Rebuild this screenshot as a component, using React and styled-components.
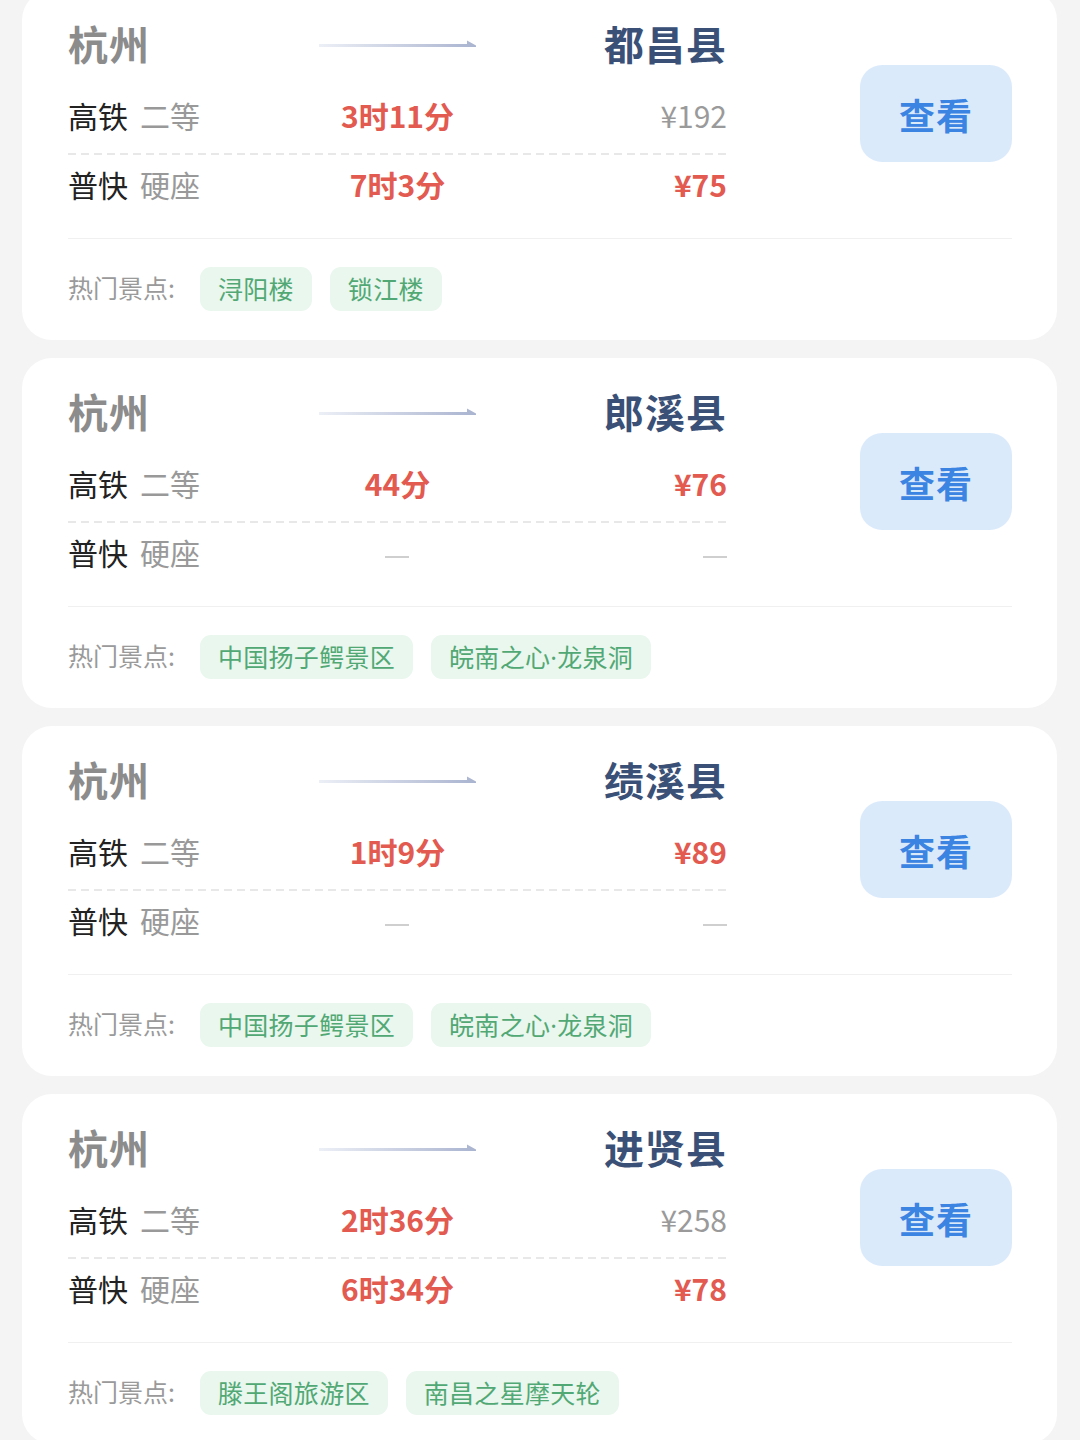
import React from 'react'
import styled, { createGlobalStyle } from 'styled-components'

const GlobalStyle = createGlobalStyle`
    html, body {
        margin: 0;
        padding: 0;
        background: #f4f4f4;
        font-family: "Noto Sans CJK SC", "Noto Sans", sans-serif;
    }
`;

const List = styled.div`
    display: flex;
    flex-direction: column;
    gap: 18px;
    padding: 0 23px 40px 22px;
    margin-top: -10px;
`;

const Card = styled.section`
    background: #ffffff;
    border-radius: 30px;
    padding: 25px 45px 29px 46px;
`;

const Top = styled.div`
    display: flex;
    justify-content: space-between;
    align-items: flex-start;
    padding-bottom: 23px;
    border-bottom: 1px solid #f0f0f0;
`;

const Info = styled.div`
    width: 659px;
`;

const Header = styled.div`
    display: grid;
    grid-template-columns: 1fr 1fr 1fr;
    align-items: center;
    height: 56px;
    margin-bottom: 13px;
`;

const City = styled.div`
    font-size: 40px;
    font-weight: 700;
    line-height: 56px;
    color: ${p => (p.$dest ? '#3a5077' : '#8c8c8c')};
    text-align: ${p => (p.$dest ? 'right' : 'left')};
    letter-spacing: 1px;
`;

const ArrowWrap = styled.div`
    display: flex;
    justify-content: center;
    padding-top: 2px;
`;

const Row = styled.div`
    display: grid;
    grid-template-columns: 1fr 1fr 1fr;
    align-items: center;
    height: 62px;
`;

const Dashed = styled.div`
    height: 2px;
    margin: 7px 0 -2px;
    background-image: linear-gradient(to right, #e8e8e8 62%, transparent 0);
    background-size: 13px 2px;
    background-repeat: repeat-x;
`;

const Train = styled.div`
    font-size: 30px;
    line-height: 40px;
    color: #222;
    white-space: nowrap;

    span {
        color: #999;
        margin-left: 12px;
    }
`;

const Duration = styled.div`
    text-align: center;
    font-size: 30px;
    line-height: 40px;
    font-weight: 700;
    color: #e25a50;
`;

const Price = styled.div`
    text-align: right;
    font-size: 30px;
    line-height: 40px;
    font-weight: ${p => (p.$hot ? 700 : 400)};
    color: ${p => (p.$hot ? '#e25a50' : '#9a9a9a')};
`;

const Empty = styled.span`
    display: inline-block;
    width: 24px;
    height: 2px;
    background: #cfcfcf;
    vertical-align: middle;
`;

const ViewButton = styled.button`
    margin-top: 50px;
    width: 152px;
    height: 97px;
    border: none;
    border-radius: 22px;
    background: #dbeafb;
    color: #3b84e2;
    font-family: inherit;
    font-size: 36px;
    font-weight: 700;
    letter-spacing: 1px;
    cursor: pointer;
`;

const Spots = styled.div`
    display: flex;
    align-items: center;
    gap: 18px;
    margin-top: 28px;
`;

const SpotsLabel = styled.span`
    font-size: 25px;
    color: #9a9a9a;
    margin-right: 7px;
    margin-top: -4px;
`;

const Tag = styled.span`
    height: 44px;
    line-height: 44px;
    padding: 0 18px;
    border-radius: 11px;
    background: #e9f7ee;
    color: #52a874;
    font-family: "Noto Sans", "Noto Sans CJK SC", sans-serif;
    font-size: 25px;
    letter-spacing: 0.3px;
`;

function Arrow() {
    return (
        <svg width="157" height="10" viewBox="0 0 157 10">
            <defs>
                <linearGradient id="arr" x1="0" x2="1" y1="0" y2="0">
                    <stop offset="0" stopColor="#eceff6" />
                    <stop offset="1" stopColor="#aab4d0" />
                </linearGradient>
            </defs>
            <path d="M0 5 H148 V1.5 L157 6.5 V8 H0 Z" fill="url(#arr)" />
        </svg>
    )
}

const routes = [
    {
        dest: '都昌县',
        fast: { dur: '3时11分', price: '¥192', hot: false },
        slow: { dur: '7时3分', price: '¥75', hot: true },
        spots: ['浔阳楼', '锁江楼'],
    },
    {
        dest: '郎溪县',
        fast: { dur: '44分', price: '¥76', hot: true },
        slow: null,
        spots: ['中国扬子鳄景区', '皖南之心·龙泉洞'],
    },
    {
        dest: '绩溪县',
        fast: { dur: '1时9分', price: '¥89', hot: true },
        slow: null,
        spots: ['中国扬子鳄景区', '皖南之心·龙泉洞'],
    },
    {
        dest: '进贤县',
        fast: { dur: '2时36分', price: '¥258', hot: false },
        slow: { dur: '6时34分', price: '¥78', hot: true },
        spots: ['滕王阁旅游区', '南昌之星摩天轮'],
    },
];

function TrainRow({ name, seat, data }) {
    return (
        <Row>
            <Train>{name}<span>{seat}</span></Train>
            <Duration>{data ? data.dur : <Empty />}</Duration>
            <Price $hot={data && data.hot}>{data ? data.price : <Empty />}</Price>
        </Row>
    )
}

function RouteCard({ route }) {
    return (
        <Card>
            <Top>
                <Info>
                    <Header>
                        <City>杭州</City>
                        <ArrowWrap><Arrow /></ArrowWrap>
                        <City $dest>{route.dest}</City>
                    </Header>
                    <TrainRow name="高铁" seat="二等" data={route.fast} />
                    <Dashed />
                    <TrainRow name="普快" seat="硬座" data={route.slow} />
                </Info>
                <ViewButton>查看</ViewButton>
            </Top>
            <Spots>
                <SpotsLabel>热门景点:</SpotsLabel>
                {route.spots.map(s => <Tag key={s}>{s}</Tag>)}
            </Spots>
        </Card>
    )
}

export default function App() {
    return (
        <>
            <GlobalStyle />
            <List>
                {routes.map(r => <RouteCard key={r.dest} route={r} />)}
            </List>
        </>
    )
}
